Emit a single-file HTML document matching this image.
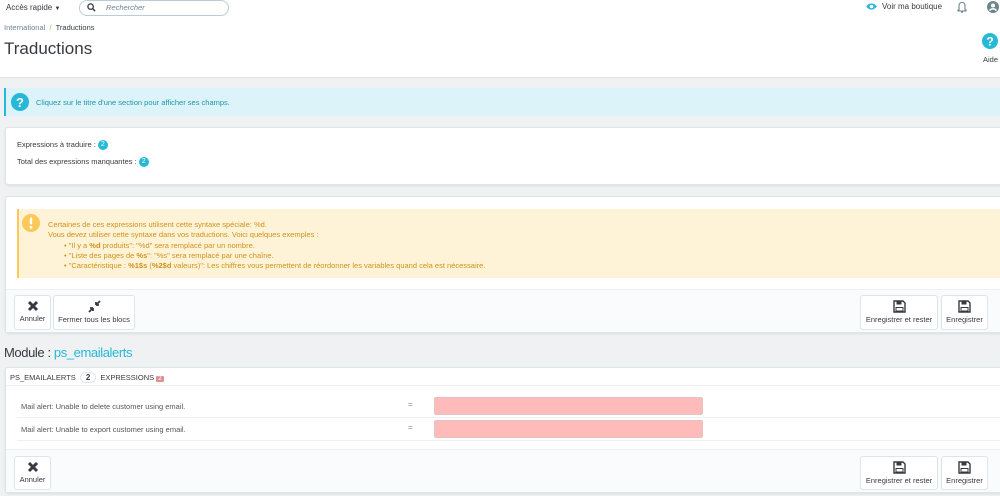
<!DOCTYPE html>
<html><head><meta charset="utf-8"><style>
*{box-sizing:border-box;margin:0;padding:0}
body{width:1000px;height:496px;overflow:hidden;background:#eff1f2;font-family:"Liberation Sans",sans-serif;color:#363a41;position:relative}
.a{position:absolute}
.hdr{left:0;top:0;width:1000px;height:78px;background:#fff;border-bottom:1px solid #dfe3e5}
.panel{background:#fff;border:1px solid #dbe6e9;border-radius:3px;box-shadow:0 1px 2px rgba(0,0,0,.08)}
.btn{background:#fff;border:1px solid #dbe6e9;border-radius:3px;font-size:7.5px;color:#363a41;text-align:center}
.btn svg{display:block;margin:4px auto 2px}
.badge{display:inline-block;background:#25b9d7;color:#fff;border-radius:50%;width:10px;height:10px;font-size:7px;line-height:10px;text-align:center;vertical-align:middle}
.inp{background:#ffbaba;border:1px solid #e6c3c3;border-radius:2px}
</style></head><body>
<div class="a hdr"></div>
<div class="a" style="left:6px;top:3px;font-size:8px">Accès rapide <span style="font-size:6px">&#9660;</span></div>
<div class="a" style="left:79px;top:0;width:150px;height:16px;border:1px solid #bbcdd2;border-radius:9px"></div>
<svg class="a" style="left:87px;top:3px" width="9" height="9" viewBox="0 0 10 10"><circle cx="4" cy="4" r="3" fill="none" stroke="#363a41" stroke-width="1.4"/><path d="M6.3 6.3L9 9" stroke="#363a41" stroke-width="1.6"/></svg>
<div class="a" style="left:106px;top:3px;font-size:7.5px;font-style:italic;color:#6c868e">Rechercher</div>
<svg class="a" style="left:866px;top:2px" width="11" height="9" viewBox="0 0 12 10"><path d="M0 5Q6 -2 12 5Q6 12 0 5Z" fill="#25b9d7"/><circle cx="6" cy="5" r="2" fill="#fff"/></svg>
<div class="a" style="left:882px;top:2px;font-size:8px;color:#363a41">Voir ma boutique</div>
<svg class="a" style="left:957px;top:1px" width="10" height="12" viewBox="0 0 10 12"><path d="M2 9V5Q2 1.5 5 1.5Q8 1.5 8 5V9H9V10H1V9Z" fill="none" stroke="#6c868e" stroke-width="1.1"/><circle cx="5" cy="11" r="1" fill="#6c868e"/></svg>
<svg class="a" style="left:987px;top:1px" width="12" height="12" viewBox="0 0 12 12"><circle cx="6" cy="6" r="6" fill="#6c868e"/><circle cx="6" cy="4.5" r="2" fill="#fff"/><path d="M2.5 9.5Q6 6 9.5 9.5" stroke="#fff" stroke-width="1.5" fill="none"/></svg>
<div class="a" style="left:4px;top:23px;font-size:7.5px;color:#6c868e">International &nbsp;<span style="color:#8bc954">/</span>&nbsp; <span style="color:#363a41">Traductions</span></div>
<div class="a" style="left:4px;top:39px;font-size:17px;color:#363a41">Traductions</div>
<svg class="a" style="left:982px;top:33px" width="16" height="16" viewBox="0 0 16 16"><circle cx="8" cy="8" r="8" fill="#25b9d7"/><text x="8" y="12.5" font-size="12" font-weight="bold" fill="#fff" text-anchor="middle" font-family="Liberation Sans">?</text></svg>
<div class="a" style="left:983px;top:55px;font-size:7.5px">Aide</div>

<div class="a" style="left:4px;top:88px;width:996px;height:28px;background:#dcf4f9;border-left:2px solid #25b9d7"></div>
<svg class="a" style="left:11px;top:93px" width="18" height="18" viewBox="0 0 18 18"><circle cx="9" cy="9" r="9" fill="#25b9d7"/><text x="9" y="14" font-size="13" font-weight="bold" fill="#fff" text-anchor="middle" font-family="Liberation Sans">?</text></svg>
<div class="a" style="left:36px;top:98px;font-size:7.5px;color:#1e94ab">Cliquez sur le titre d'une section pour afficher ses champs.</div>

<div class="a panel" style="left:5px;top:127px;width:1000px;height:58px"></div>
<div class="a" style="left:17px;top:140px;font-size:7.5px">Expressions à traduire : <span class="badge">2</span></div>
<div class="a" style="left:17px;top:157px;font-size:7.5px">Total des expressions manquantes : <span class="badge">2</span></div>

<div class="a panel" style="left:5px;top:196px;width:1000px;height:137px"></div>
<div class="a" style="left:17px;top:209px;width:990px;height:69px;background:#fff3d7;border-left:2px solid #fcc85a"></div>
<svg class="a" style="left:22px;top:214px" width="18" height="18" viewBox="0 0 18 18"><circle cx="9" cy="9" r="9" fill="#fcc85a"/><rect x="7.8" y="3.5" width="2.4" height="7" rx="1" fill="#fff"/><circle cx="9" cy="13.3" r="1.4" fill="#fff"/></svg>
<div class="a" style="left:48px;top:220px;font-size:7.5px;line-height:10.3px;color:#d0921a">Certaines de ces expressions utilisent cette syntaxe spéciale: %d.<br>Vous devez utiliser cette syntaxe dans vos traductions. Voici quelques exemples :
<div style="padding-left:16px">• "Il y a <b>%d</b> produits": "%d" sera remplacé par un nombre.<br>• "Liste des pages de <b>%s</b>": "%s" sera remplacé par une chaîne.<br>• "Caractéristique : <b>%1$s</b> (<b>%2$d</b> valeurs)": Les chiffres vous permettent de réordonner les variables quand cela est nécessaire.</div></div>
<div class="a" style="left:6px;top:289px;width:994px;height:43px;background:#fafbfc;border-top:1px solid #eef0f1"></div>
<div class="a btn" style="left:14px;top:295px;width:37px;height:35px"><svg width="12" height="12" viewBox="0 0 12 12"><path d="M2 2L10 10M10 2L2 10" stroke="#363a41" stroke-width="3"/></svg>Annuler</div>
<div class="a btn" style="left:53px;top:295px;width:82px;height:35px"><svg width="13" height="13" viewBox="0 0 13 13"><path d="M1 12L5 8M5 8H2M5 8V11M12 1L8 5M8 5H11M8 5V2" stroke="#363a41" stroke-width="1.8" fill="none"/></svg>Fermer tous les blocs</div>
<div class="a btn" style="left:860px;top:295px;width:78px;height:35px"><svg width="13" height="13" viewBox="0 0 13 13"><path d="M1 1H10L12 3V12H1Z" fill="none" stroke="#363a41" stroke-width="1.4"/><rect x="3.5" y="1.5" width="5" height="3" fill="#363a41"/><rect x="3" y="7.5" width="7" height="3.5" fill="none" stroke="#363a41" stroke-width="1"/></svg>Enregistrer et rester</div>
<div class="a btn" style="left:941px;top:295px;width:47px;height:35px"><svg width="13" height="13" viewBox="0 0 13 13"><path d="M1 1H10L12 3V12H1Z" fill="none" stroke="#363a41" stroke-width="1.4"/><rect x="3.5" y="1.5" width="5" height="3" fill="#363a41"/><rect x="3" y="7.5" width="7" height="3.5" fill="none" stroke="#363a41" stroke-width="1"/></svg>Enregistrer</div>

<div class="a" style="left:4px;top:345px;font-size:13px;letter-spacing:-0.4px;color:#363a41">Module : <span style="color:#25b9d7">ps_emailalerts</span></div>
<div class="a panel" style="left:5px;top:367px;width:1000px;height:126px"></div>
<div class="a" style="left:10px;top:372px;font-size:7.5px;color:#363a41">PS_EMAILALERTS <span style="display:inline-block;border:1px solid #dbe6e9;border-radius:7px;padding:0 5px;margin:0 2px;font-weight:bold;font-size:8px">2</span> EXPRESSIONS <span style="display:inline-block;background:#e08f95;color:#fff;font-size:6px;padding:0 2px;border-radius:1px">2</span></div>
<div class="a" style="left:6px;top:385px;width:994px;height:1px;background:#eef0f1"></div>
<div class="a" style="left:21px;top:402px;font-size:7.5px;color:#555">Mail alert: Unable to delete customer using email.</div>
<div class="a" style="left:408px;top:400px;font-size:8px;color:#888">=</div>
<div class="a inp" style="left:434px;top:397px;width:269px;height:18px"></div>
<div class="a" style="left:17px;top:417px;width:983px;height:1px;background:#eef0f1"></div>
<div class="a" style="left:21px;top:425px;font-size:7.5px;color:#555">Mail alert: Unable to export customer using email.</div>
<div class="a" style="left:408px;top:423px;font-size:8px;color:#888">=</div>
<div class="a inp" style="left:434px;top:420px;width:269px;height:18px"></div>
<div class="a" style="left:17px;top:440px;width:983px;height:1px;background:#eef0f1"></div>
<div class="a" style="left:6px;top:449px;width:994px;height:43px;background:#fafbfc;border-top:1px solid #eef0f1"></div>
<div class="a btn" style="left:14px;top:456px;width:37px;height:34px"><svg width="12" height="12" viewBox="0 0 12 12"><path d="M2 2L10 10M10 2L2 10" stroke="#363a41" stroke-width="3"/></svg>Annuler</div>
<div class="a btn" style="left:860px;top:456px;width:78px;height:34px"><svg width="13" height="13" viewBox="0 0 13 13"><path d="M1 1H10L12 3V12H1Z" fill="none" stroke="#363a41" stroke-width="1.4"/><rect x="3.5" y="1.5" width="5" height="3" fill="#363a41"/><rect x="3" y="7.5" width="7" height="3.5" fill="none" stroke="#363a41" stroke-width="1"/></svg>Enregistrer et rester</div>
<div class="a btn" style="left:941px;top:456px;width:47px;height:34px"><svg width="13" height="13" viewBox="0 0 13 13"><path d="M1 1H10L12 3V12H1Z" fill="none" stroke="#363a41" stroke-width="1.4"/><rect x="3.5" y="1.5" width="5" height="3" fill="#363a41"/><rect x="3" y="7.5" width="7" height="3.5" fill="none" stroke="#363a41" stroke-width="1"/></svg>Enregistrer</div>
</body></html>
